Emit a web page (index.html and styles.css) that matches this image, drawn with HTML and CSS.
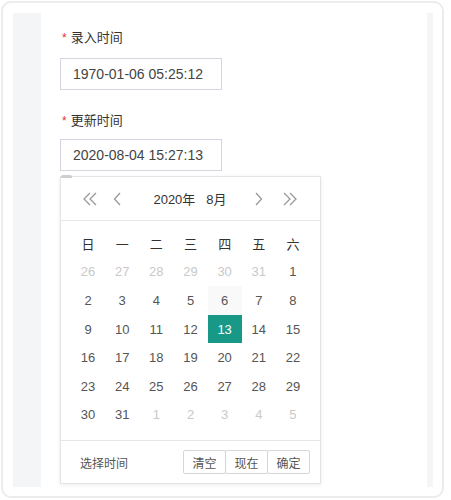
FILE: index.html
```html
<!DOCTYPE html>
<html lang="zh">
<head>
<meta charset="utf-8">
<link rel="stylesheet" href="styles.css">
</head>
<body>
<div class="card">
  <div class="frame">
    <div class="panel">
      <div class="form-item">
        <div class="label"><span class="req">*</span>录入时间</div>
        <div class="input">1970-01-06 05:25:12</div>
      </div>
      <div class="form-item picker-wrap">
        <div class="label"><span class="req">*</span>更新时间</div>
        <div class="input">2020-08-04 15:27:13</div>
        <div class="popup">
          <div class="popup-tab"></div>
          <div class="cal-head">
            <svg class="ico dbl" width="16" height="14" viewBox="0 0 16 14"><path d="M8 1L2 7L8 13M14 1L8 7L14 13" fill="none" stroke="#999" stroke-width="1.3"/></svg>
            <svg class="ico sgl" width="8" height="14" viewBox="0 0 8 14"><path d="M7 1L1.5 7L7 13" fill="none" stroke="#999" stroke-width="1.3"/></svg>
            <div class="title">2020年<span class="month">8月</span></div>
            <svg class="ico sgl" width="8" height="14" viewBox="0 0 8 14"><path d="M1 1L6.5 7L1 13" fill="none" stroke="#999" stroke-width="1.3"/></svg>
            <svg class="ico dbl" width="16" height="14" viewBox="0 0 16 14"><path d="M2 1L8 7L2 13M8 1L14 7L8 13" fill="none" stroke="#999" stroke-width="1.3"/></svg>
          </div>
          <div class="cal-body">
            <div class="grid">
              <span class="wk">日</span><span class="wk">一</span><span class="wk">二</span><span class="wk">三</span><span class="wk">四</span><span class="wk">五</span><span class="wk">六</span>
              <span class="d off">26</span><span class="d off">27</span><span class="d off">28</span><span class="d off">29</span><span class="d off">30</span><span class="d off">31</span><span class="d">1</span>
              <span class="d">2</span><span class="d">3</span><span class="d">4</span><span class="d">5</span><span class="d hover">6</span><span class="d">7</span><span class="d">8</span>
              <span class="d">9</span><span class="d">10</span><span class="d">11</span><span class="d">12</span><span class="d sel">13</span><span class="d">14</span><span class="d">15</span>
              <span class="d">16</span><span class="d">17</span><span class="d">18</span><span class="d">19</span><span class="d">20</span><span class="d">21</span><span class="d">22</span>
              <span class="d">23</span><span class="d">24</span><span class="d">25</span><span class="d">26</span><span class="d">27</span><span class="d">28</span><span class="d">29</span>
              <span class="d">30</span><span class="d">31</span><span class="d off">1</span><span class="d off">2</span><span class="d off">3</span><span class="d off">4</span><span class="d off">5</span>
            </div>
          </div>
          <div class="cal-foot">
            <span class="pick-time">选择时间</span>
            <div class="btns">
              <span class="btn">清空</span><span class="btn">现在</span><span class="btn">确定</span>
            </div>
          </div>
        </div>
      </div>
    </div>
  </div>
</div>
</body>
</html>
```

FILE: styles.css
```css
* { box-sizing: border-box; }
html, body { margin: 0; padding: 0; background: #fff; }
body {
  font-family: "Liberation Sans", "Noto Sans CJK SC", sans-serif;
  color: #333;
}
.card {
  margin: 1px 0 0 1px;
  width: 443px;
  height: 497px;
  border: 2px solid #ececec;
  border-radius: 10px;
  padding: 10px 9px 9px 10px;
}
.frame {
  height: 100%;
  background: #f4f5f7;
  padding: 0 6px 0 28px;
  display: flex;
}
.panel {
  flex: 1;
  background: #fff;
  padding: 15px 0 0 19px;
}
.form-item { margin-bottom: 21px; }
.label {
  font-size: 13px;
  line-height: 20px;
  color: #333;
  margin-bottom: 10px;
  padding-left: 2px;
}
.picker-wrap .label { margin-bottom: 8px; }
.req { color: #e5342d; margin-right: 4px; font-size: 12px; }
.input {
  width: 162px;
  height: 32px;
  border: 1px solid #d3d8e0;
  font-size: 14px;
  line-height: 30px;
  padding-left: 12px;
  color: #444;
}
.picker-wrap { position: relative; }
.popup {
  position: absolute;
  left: 0;
  top: 65px;
  width: 261px;
  background: #fff;
  border: 1px solid #e4e4e4;
  box-shadow: 0 1px 4px rgba(0,0,0,0.08);
}
.popup-tab {
  position: absolute;
  left: 0;
  top: -2px;
  width: 11px;
  height: 3px;
  background: #cfcfcf;
  border-radius: 2px 2px 0 0;
}
.cal-head {
  height: 44px;
  border-bottom: 1px solid #e6e6e6;
  display: flex;
  align-items: center;
  padding: 0 22px 0 21px;
}
.ico { display: block; }
.dbl + .sgl { margin-left: 15px; }
.sgl + .dbl { margin-left: 19px; }
.title {
  flex: 1;
  text-align: center;
  font-size: 13px;
  color: #333;
  padding-left: 4px;
}
.month { margin-left: 11px; }
.cal-body { padding: 8px 10px 11px; }
.grid {
  display: grid;
  grid-template-columns: repeat(7, 1fr);
  grid-auto-rows: 28.6px;
}
.grid span {
  display: flex;
  align-items: center;
  justify-content: center;
  font-size: 13px;
}
.wk { color: #333; }
.d { color: #555; }
.d.off { color: #c9c9c9; }
.d.hover { background: #f9f9f9; }
.d.sel { background: #189886; color: #fff; }
.cal-foot {
  height: 43px;
  border-top: 1px solid #e6e6e6;
  display: flex;
  align-items: center;
  justify-content: space-between;
  padding: 0 10px 0 19px;
}
.pick-time { font-size: 12px; color: #555; }
.btns { display: flex; }
.btn {
  height: 24px;
  width: 43px;
  border: 1px solid #d6d6d6;
  border-radius: 2px;
  font-size: 12px;
  color: #555;
  display: flex;
  align-items: center;
  justify-content: center;
  background: #fff;
}
.btn + .btn { margin-left: -1px; }
```
